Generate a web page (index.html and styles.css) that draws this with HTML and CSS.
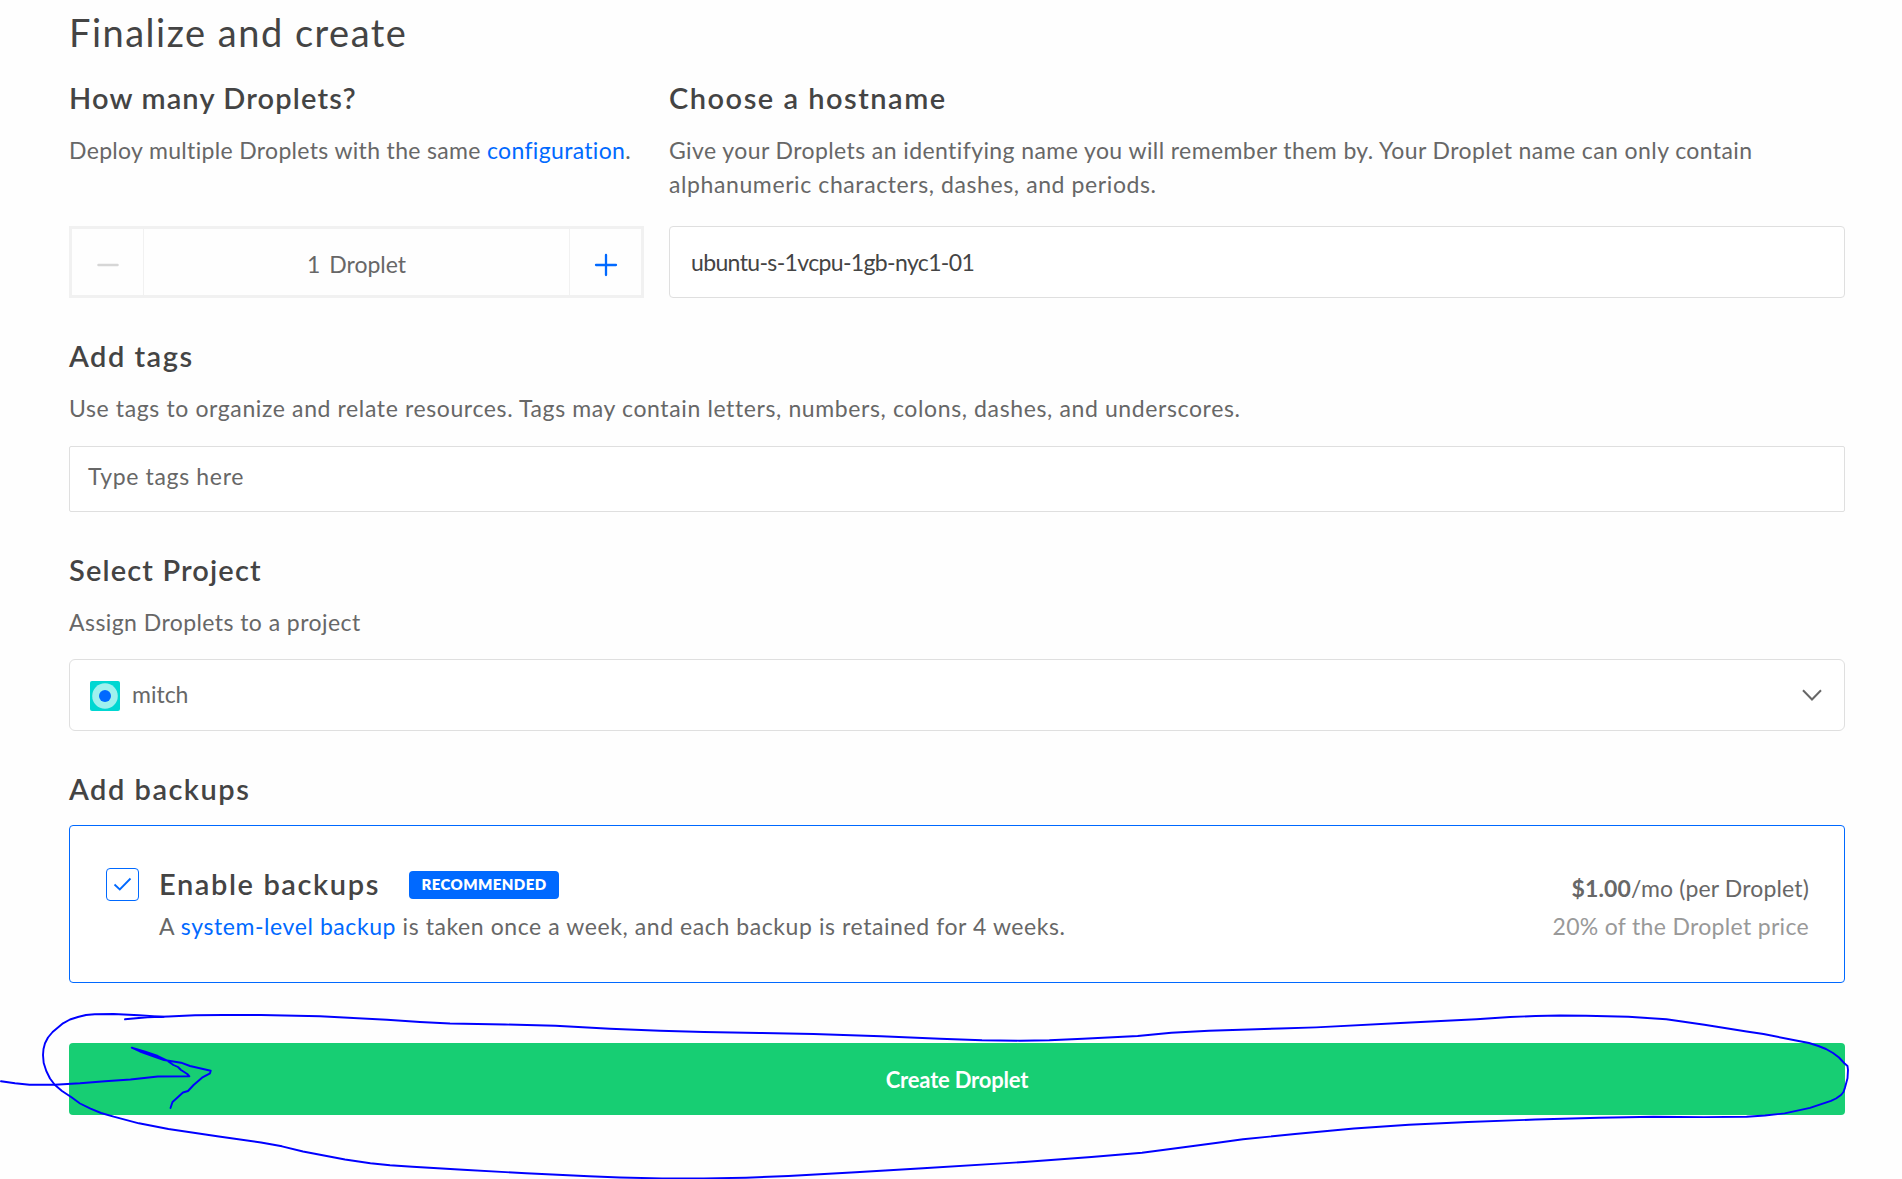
FILE: index.html
```
<!DOCTYPE html>
<html lang="en">
<head>
<meta charset="utf-8">
<title>Create Droplets</title>
<link rel="stylesheet" href="styles.css">
</head>
<body>
<main class="page">
  <h1 class="title">Finalize and create</h1>

  <div class="columns">
    <section class="count">
      <h2 class="heading tight">How many Droplets?</h2>
      <p class="text deploy">Deploy multiple Droplets with the same <a class="link">configuration</a>.</p>
      <div class="stepper">
        <button class="step minus" aria-label="Remove"><svg width="24" height="26" viewBox="0 0 24 26"><path d="M2.500 13H21.500" stroke="#d6d6d6" stroke-width="2.500" stroke-linecap="round"/></svg></button>
        <div class="amount"><span class="one">1</span><span>Droplet</span></div>
        <button class="step plus" aria-label="Add"><svg width="24" height="26" viewBox="0 0 24 26"><path d="M2 13H22M12 3V23" stroke="#0069ff" stroke-width="2.300" stroke-linecap="round"/></svg></button>
      </div>
    </section>
    <section class="host">
      <h2 class="heading">Choose a hostname</h2>
      <p class="text"><span class="give">Give your Droplets an identifying name you will remember them by. Your Droplet name can only contain</span><br>alphanumeric characters, dashes, and periods.</p>
      <div class="field hostname">ubuntu-s-1vcpu-1gb-nyc1-01</div>
    </section>
  </div>

  <section class="block">
    <h2 class="heading">Add tags</h2>
    <p class="text tags-text">Use tags to organize and relate resources. Tags may contain letters, numbers, colons, dashes, and underscores.</p>
    <div class="field tags">Type tags here</div>
  </section>

  <section class="block">
    <h2 class="heading tight">Select Project</h2>
    <p class="text assign">Assign Droplets to a project</p>
    <div class="field project">
      <svg class="avatar" width="30" height="30" viewBox="0 0 30 30"><rect width="30" height="30" rx="2" fill="#00d7d2"/><circle cx="15" cy="15" r="12.800" fill="#9ff1ee"/><circle cx="15" cy="15" r="6" fill="#0069ff"/></svg>
      <span class="name">mitch</span>
      <svg width="20" height="12" viewBox="0 0 20 12"><path d="M1 1.300L10 10.500L19 1.300" fill="none" stroke="#676767" stroke-width="2"/></svg>
    </div>
  </section>

  <section class="block">
    <h2 class="heading">Add backups</h2>
    <div class="backup">
      <span class="check"><svg width="19" height="15" viewBox="0 0 19 15"><path d="M1.500 7.500L6.800 12.500L17.500 1.500" fill="none" stroke="#0069ff" stroke-width="1.800"/></svg></span>
      <div class="info">
        <div class="row"><h2 class="heading enable">Enable backups</h2><span class="badge">RECOMMENDED</span></div>
        <p class="text weekly">A <a class="link">system-level backup</a> is taken once a week, and each backup is retained for 4 weeks.</p>
      </div>
      <div class="price">
        <div class="month"><b>$1.00</b>/mo (per Droplet)</div>
        <div class="percent">20% of the Droplet price</div>
      </div>
    </div>
  </section>

  <button class="create">Create Droplet</button>

  <svg class="ink" width="1902" height="1179" viewBox="0 0 1902 1179">
    <polyline points="1,1081.300 15,1083.300 29.500,1084.700 54.700,1084.700 80,1083.300 105,1081.300 130.500,1079.500 157.800,1076.500 189.400,1076.300 187.300,1074 181,1070 178,1067 173.400,1065 166.200,1060 157.800,1056 145.200,1051.700 131.700,1047.700 140,1051.500 154,1056.500 164,1060 181,1062.700 190,1066 210.700,1070.700 210,1073.300 202,1077.700 193.600,1085 188,1091 183,1092.500 172.500,1102 170.500,1108"/>
    <polyline points="125,1019.300 147.300,1017.300 168.400,1016.500 195,1015.300 223,1015 261,1015 320,1016.300 387,1019.700 420,1022 450,1023.500 505,1024.500 555.500,1025.700 610,1028.700 660,1030.700 704,1032 760,1033 813.600,1034 881,1036.300 940,1038.700 982,1040.300 1020,1040.700 1049.300,1040.300 1083,1038.700 1137.700,1036 1171.400,1032.700 1209,1030.700 1280,1028.500 1316,1027.400 1400.400,1023 1476.400,1019.200 1510,1017 1535.500,1016 1560,1015.500 1586,1015.700 1628.400,1016.800 1666.400,1019.200 1704.400,1024.700 1746.600,1031.500 1763.500,1034 1797.300,1040.800 1809,1043 1818.400,1046 1826,1049 1833,1053 1839,1057.500 1844.600,1063.500 1847.500,1066 1848,1070 1847.500,1078.300 1845,1087.600 1843.500,1092 1841,1095 1836,1098.500 1831,1100.800 1810,1107.900 1784.600,1113.400 1765,1115.500 1746.600,1116.800 1704,1117.100 1653.700,1116.800 1599,1117.800 1535.500,1119.500 1468,1122 1409,1124.700 1354,1128.500 1295,1134 1243,1139.300 1217.600,1142.700 1180,1147.700 1142,1152.700 1091.400,1157 1024,1162 923,1168.300 855.700,1172.300 788.400,1176 746,1177.700 704,1178.500 662,1178.500 620,1177.500 589,1176.300 526,1173.300 463,1169.700 412.500,1166.700 390,1165.300 370.400,1163.300 345,1159.500 303,1151.500 282,1146.300 261,1142.500 218.900,1136.500 168.400,1129 138.900,1123.300 113.600,1116.700 101,1113 90.500,1108.700 80,1103.500 71.500,1097.300 62,1091 54.700,1084.700 50,1078.500 46.300,1071 43.700,1063 43,1055 43.500,1049 45,1043.300 48,1037.500 52.600,1032 63,1023.300 70,1019.500 77.900,1017 86,1015 94.700,1014.300 113.600,1014 138.900,1015.300 164,1017"/>
  </svg>
</main>
</body>
</html>
```

FILE: styles.css
```
* { box-sizing: border-box; }
body {
  margin: 0;
  background: #fefefe;
  font-family: Lato, "Liberation Sans", sans-serif;
  font-size: 23px;
  line-height: 34px;
  color: #676767;
}
.page {
  position: relative;
  width: 1902px;
  height: 1179px;
  padding: 10px 57px 0 69px;
  overflow: hidden;
}
h1, h2, p { margin: 0; }
.title {
  height: 44px;
  margin-bottom: 27px;
  font-size: 38px;
  line-height: 44px;
  font-weight: 400;
  letter-spacing: 1.5px;
  color: #444;
}
.columns { display: flex; gap: 25px; }
.count { width: 575px; }
.host { flex: 1; }
.heading {
  margin-bottom: 17px;
  font-size: 29px;
  line-height: 34px;
  font-weight: 600;
  letter-spacing: 1.5px;
  color: #444;
  white-space: nowrap;
}
.heading.tight { letter-spacing: 1.15px; }
.text {
  padding-top: 1px;
  margin-bottom: -1px;
  white-space: nowrap;
  letter-spacing: .6px;
}
.deploy { height: 69px; letter-spacing: .33px; }
.give { letter-spacing: .41px; }
.assign { letter-spacing: .43px; }
.tags-text { letter-spacing: .62px; }
.link { color: #0069ff; }
.stepper {
  display: flex;
  height: 72px;
  margin-top: 27px;
  border: 3px solid #f1f1f1;
}
.text + .stepper { margin-top: 26px; }
.step {
  width: 72px;
  padding: 5px 0 0;
  border: 0;
  background: none;
  display: flex;
  align-items: center;
  justify-content: center;
}
.minus { border-right: 1px solid #f1f1f1; }
.plus { border-left: 1px solid #f1f1f1; }
.amount {
  flex: 1;
  display: flex;
  justify-content: center;
  gap: 9px;
  padding-top: 18px;
}
.field {
  border: 1px solid #dfdfdf;
  border-radius: 4px;
  background: #fff;
}
.hostname {
  height: 72px;
  margin-top: 26px;
  padding: 18px 21px;
  letter-spacing: -.64px;
  color: #444;
}
.block { margin-top: 41px; }
.tags {
  height: 66px;
  margin-top: 22px;
  padding: 12px 18px;
  border-radius: 2px;
  letter-spacing: .65px;
}
.project {
  display: flex;
  align-items: center;
  height: 72px;
  margin-top: 21px;
  padding: 0 22px 0 20px;
  border-radius: 6px;
}
.avatar { margin-top: 2px; }
.name { flex: 1; margin: -2px 0 0 12px; }
.backup {
  display: flex;
  height: 158px;
  margin-top: 19px;
  padding: 41px 35px 0 36px;
  border: 1px solid #0069ff;
  border-radius: 4px;
  background: #fff;
}
.block .heading:has(+ .backup) { margin-bottom: 0; }
.check {
  width: 33px;
  height: 33px;
  margin: 1px 20px 0 0;
  border: 1px solid #0069ff;
  border-radius: 4px;
  display: flex;
  align-items: center;
  justify-content: center;
}
.info { flex: 1; }
.row { display: flex; align-items: center; margin-bottom: 7px; }
.enable { margin: 0; width: 250px; letter-spacing: 1.6px; }
.weekly { letter-spacing: .58px; }
.badge {
  width: 150px;
  height: 28px;
  margin-top: 1px;
  border-radius: 4px;
  background: #0069ff;
  color: #fff;
  font-size: 15px;
  line-height: 27px;
  font-weight: 800;
  text-align: center;
  letter-spacing: .4px;
}
.price {
  padding-top: 2px;
  line-height: 38px;
  text-align: right;
}
.month { letter-spacing: .15px; }
.percent { letter-spacing: .32px; color: #999; }
.create {
  display: block;
  width: 100%;
  height: 72px;
  margin-top: 60px;
  padding: 1px 0 0;
  border: 0;
  border-radius: 4px;
  background: #17ce73;
  color: #fff;
  font: 700 22px/71px Lato, "Liberation Sans", sans-serif;
  letter-spacing: -.2px;
}
.ink {
  position: absolute;
  left: 0;
  top: 0;
  fill: none;
  stroke: #00f;
  stroke-width: 1.900;
  stroke-linejoin: round;
  stroke-linecap: round;
}
```
